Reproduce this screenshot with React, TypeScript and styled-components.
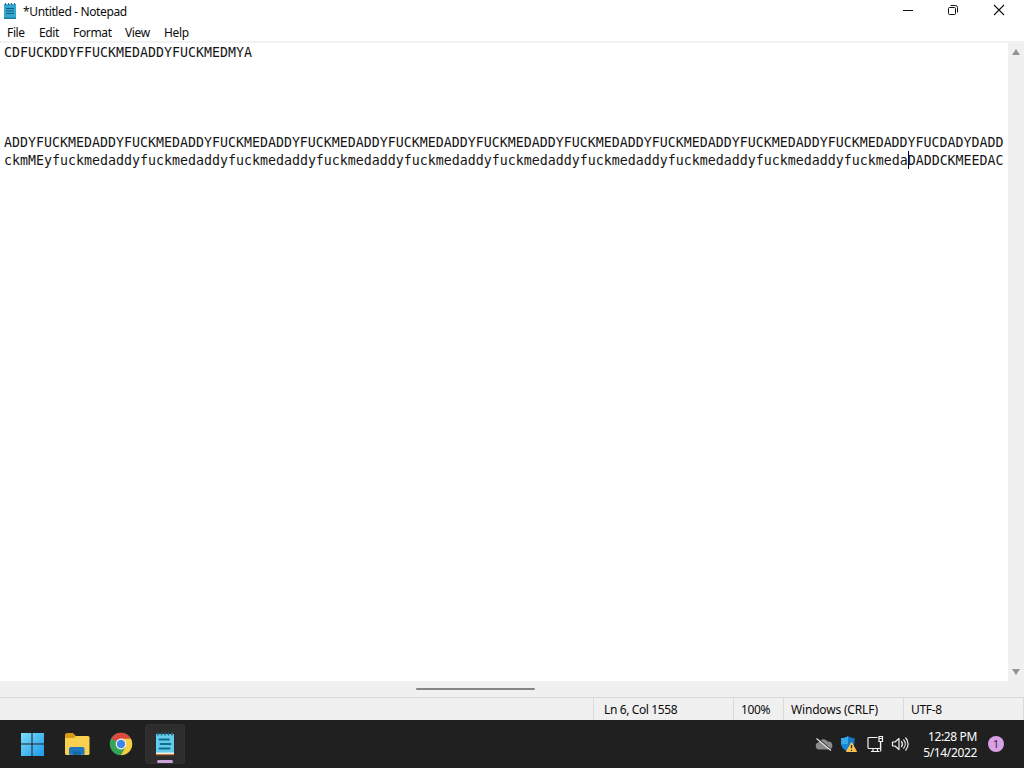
import React from 'react';
import styled, { createGlobalStyle } from 'styled-components';

const GlobalStyle = createGlobalStyle`
  * { box-sizing: border-box; }
  body { margin: 0; overflow: hidden; font-family: "Noto Sans", "Open Sans", sans-serif; font-size: 12px; color: #0c0c0c; }
`;

const Desktop = styled.div`
  width: 1024px;
  height: 768px;
  display: flex;
  flex-direction: column;
  background: #fff;
`;

const TitleBar = styled.header`
  height: 24px;
  flex: none;
  display: flex;
  align-items: center;
  padding: 0 1px 2px 3px;
`;

const Title = styled.div`
  flex: 1;
  padding: 2px 0 0 6px;
  line-height: 22px;
  letter-spacing: -0.37px;
`;

const WindowButton = styled.div<{ $width: number }>`
  width: ${(p) => p.$width}px;
  height: 22px;
  display: flex;
  justify-content: center;
  padding-top: 4px;
`;

const MenuBar = styled.nav`
  height: 19px;
  flex: none;
  display: flex;
  gap: 14px;
  padding-left: 7px;
  border-bottom: 2px solid #f2f2f2;
`;

const MenuItem = styled.span<{ $width: number }>`
  width: ${(p) => p.$width}px;
  white-space: nowrap;
  letter-spacing: -0.35px;
  line-height: 18px;
`;

const Editor = styled.main`
  flex: 1;
  display: flex;
  min-height: 0;
`;

const TextArea = styled.div`
  flex: 1;
  min-width: 0;
  overflow: hidden;
  padding: 1px 0 0 4px;
`;

const Line = styled.div`
  height: 18px;
  line-height: 18px;
  white-space: pre;
  font-family: "DejaVu Sans Mono", monospace;
  font-size: 13.289px;
  letter-spacing: 0.01px;
  color: #151515;
`;

const Caret = styled.span`
  display: inline-block;
  width: 1px;
  height: 18px;
  margin: -1px -1px 0 0;
  vertical-align: top;
  background: #000030;
`;

const VerticalScroll = styled.div`
  width: 16px;
  background: #f0f0f0;
  display: flex;
  flex-direction: column;
  justify-content: space-between;
  align-items: center;
  padding: 5px 0;
`;

const HorizontalScroll = styled.div`
  height: 16px;
  flex: none;
  background: #f0f0f0;
  padding: 7px 0 0 416px;
`;

const Thumb = styled.div`
  width: 119px;
  height: 2px;
  border-radius: 1px;
  background: #858585;
`;

const StatusBar = styled.footer`
  height: 23px;
  flex: none;
  display: flex;
  justify-content: flex-end;
  background: #f0f0f0;
  border-top: 1px solid #d9d9d9;
`;

const StatusCell = styled.div<{ $width: number; $pad: number; $spacing?: number }>`
  width: ${(p) => p.$width}px;
  padding-left: ${(p) => p.$pad}px;
  border-left: 1px solid #dadada;
  letter-spacing: ${(p) => p.$spacing ?? -0.38}px;
  line-height: 23px;
  white-space: nowrap;
  &:last-child { border-right: 1px solid #dadada; }
`;

const Taskbar = styled.div`
  height: 48px;
  flex: none;
  display: flex;
  justify-content: space-between;
  background: #202020;
  color: #fff;
`;

const Apps = styled.div`
  display: flex;
  align-items: center;
  gap: 4px;
  padding-left: 12px;
`;

const AppButton = styled.div<{ $active?: boolean }>`
  width: 40px;
  height: 40px;
  border-radius: 4px;
  display: flex;
  flex-direction: column;
  align-items: center;
  justify-content: space-between;
  padding-top: 8px;
  background: ${(p) => (p.$active ? '#2d2d2d' : 'transparent')};
  box-shadow: ${(p) => (p.$active ? 'inset 0 0 0 1px #323232' : 'none')};
  &:first-child { margin-right: 1px; }
`;

const ActiveMark = styled.div`
  width: 16px;
  height: 3px;
  margin-bottom: 1px;
  border-radius: 2px;
  background: #c9a3d6;
`;

const Tray = styled.div`
  display: flex;
  align-items: center;
  padding-right: 20px;
`;

const TrayIcon = styled.div<{ $width: number }>`
  width: ${(p) => p.$width}px;
  height: 20px;
`;

const Clock = styled.div`
  width: 66px;
  padding-top: 1px;
  text-align: right;
  line-height: 16px;
  letter-spacing: -0.36px;
  white-space: nowrap;
`;

const Badge = styled.div`
  width: 16px;
  height: 16px;
  margin-left: 11px;
  border-radius: 50%;
  background: #d9a0e6;
  color: #30203a;
  font-size: 10.5px;
  line-height: 16px;
  text-align: center;
`;

const SmallNotepad = () => (
  <svg width="14" height="18" viewBox="0 0 14 18">
    <path d="M1 2h12v15H1z" fill="#35a8cc" />
    <path d="M1 15.5h12V17H1z" fill="#1d7fa5" />
    <path d="M2.5 1v2M5.5 1v2M8.5 1v2M11.5 1v2" stroke="#236f8c" />
    <path d="M3 6.5h8M3 9h8M3 11.5h8" stroke="#135f80" strokeWidth="1.1" />
  </svg>
);

const WindowsLogo = () => (
  <svg width="24" height="24" viewBox="0 0 24 24">
    <defs>
      <linearGradient id="win" x1="0" y1="0" x2="1" y2="1">
        <stop offset="0" stopColor="#7bdcfb" />
        <stop offset="1" stopColor="#1b9bea" />
      </linearGradient>
    </defs>
    <path d="M1 1h10.5v10.5H1zM12.5 1H24v10.5H12.5zM1 12.5h10.5V24H1zM12.5 12.5H24V24H12.5z" fill="url(#win)" />
  </svg>
);

const Folder = () => (
  <svg width="26" height="24" viewBox="0 0 26 24">
    <path d="M1 3a2 2 0 0 1 2-2h6l3 3h12v8H1z" fill="#d99a16" />
    <path d="M1 6h9l2-2h12a1.500 1.500 0 0 1 1.500 1.500v16A1.500 1.500 0 0 1 24 23H2.500A1.500 1.500 0 0 1 1 21.500z" fill="#f9d04f" />
    <path d="M5 22.800v-5.800a2 2 0 0 1 2-2h11.500a2 2 0 0 1 2 2v5.800z" fill="#1f78bd" />
    <path d="M9 22.800v-3.300h8v3.300z" fill="#1567a8" />
  </svg>
);

const Chrome = () => (
  <svg width="24" height="24" viewBox="0 0 24 24">
    <circle cx="12" cy="12" r="11.200" fill="#35a456" />
    <path d="M12 12 2.300 6.400A11.200 11.200 0 0 1 21.700 6.400z" fill="#dd4b3e" />
    <path d="M12 6.700h9.900A11.200 11.200 0 0 1 12 23.200l4.600-8.500z" fill="#f9ce3d" />
    <circle cx="12" cy="12" r="5.400" fill="#f5f5f5" />
    <circle cx="12" cy="12" r="4.200" fill="#4285e8" />
  </svg>
);

const Notepad = () => (
  <svg width="20" height="24" viewBox="0 0 20 24">
    <path d="M1 2h18v19H1z" fill="#62cdea" />
    <path d="M1 20.500h18V22H1z" fill="#f1eee5" />
    <path d="M1 22h18v1.200H1z" fill="#c77a3b" />
    <path d="M3 .5v3M6.500 .5v3M10 .5v3M13.500 .5v3M17 .5v3" stroke="#22637a" strokeWidth="1.500" />
    <path d="M4.500 7.500h9.500M5.500 12h10M4.500 16.500h10" stroke="#126b8c" strokeWidth="1.800" strokeLinecap="round" />
  </svg>
);

const Cloud = () => (
  <svg width="18" height="20" viewBox="0 0 18 20">
    <path d="M4 15.500a3.700 3.700 0 0 1-.3-7.300A5 5 0 0 1 12.500 7.500 4 4 0 0 1 14 15.500z" fill="#8c8c8c" />
    <path d="m2.500 4.200 14 12" stroke="#202020" strokeWidth="1.500" />
    <path d="m1.500 4.500 14.500 12" stroke="#e8e8e8" strokeWidth="1.200" />
  </svg>
);

const Shield = () => (
  <svg width="18" height="20" viewBox="0 0 18 20">
    <path d="M8 2c2 1.500 4 2 6.500 2v5c0 4-3 7-6.500 8.500z" fill="#1676c6" />
    <path d="M8 2C6 3.500 4 4 1 4v5c0 4 3.500 7 7 8.500z" fill="#37a9e8" />
    <path d="M1 10h7v7.500C4.500 16 1.500 13.500 1 10z" fill="#1687d6" />
    <path d="m11.500 8.500 5 9h-10z" fill="#ffc24b" stroke="#ffc24b" strokeLinejoin="round" />
    <path d="M11.500 11v3.300M11.500 15.700v1.200" stroke="#302818" strokeWidth="1.300" />
  </svg>
);

const Network = () => (
  <svg width="18" height="20" viewBox="0 0 18 20" fill="none" stroke="#f2f2f2" strokeWidth="1.200">
    <path d="M11.500 3.500H3a1 1 0 0 0-1 1v9a1 1 0 0 0 1 1h11.500V8M5 17.500h8.500M7 14.500v3M11.500 14.500v3M13 2.500h3.500v5H13zM14.700 7.500v10M13 4.500h3.500" />
  </svg>
);

const Speaker = () => (
  <svg width="18" height="20" viewBox="0 0 18 20" fill="none" stroke="#f2f2f2" strokeWidth="1.200" strokeLinecap="round" strokeLinejoin="round">
    <path d="M1.500 8v4H4l4 3.500v-11L4 8zM10.500 7.500a4 4 0 0 1 0 5M12.700 5.800a6.500 6.500 0 0 1 0 8.400M14.800 4a9 9 0 0 1 0 12" />
  </svg>
);

const upperRun = 'ADDYFUCKMED'.repeat(10);
const lowerRun = 'fuckmedaddy'.repeat(9);

const menus = [
  { label: 'File', width: 18 },
  { label: 'Edit', width: 20 },
  { label: 'Format', width: 38 },
  { label: 'View', width: 25 },
  { label: 'Help', width: 26 },
];

export default function App() {
  return (
    <Desktop>
      <GlobalStyle />
      <TitleBar>
        <SmallNotepad />
        <Title>*Untitled - Notepad</Title>
        <WindowButton $width={46}>
          <svg width="12" height="12"><path d="M1 6.500h10" stroke="#111" /></svg>
        </WindowButton>
        <WindowButton $width={44}>
          <svg width="12" height="12" fill="none" stroke="#111">
            <rect x="1.500" y="3.500" width="7" height="7" rx="1" />
            <path d="M3.500 1.500h5a2 2 0 0 1 2 2v5" />
          </svg>
        </WindowButton>
        <WindowButton $width={48}>
          <svg width="12" height="12"><path d="m1 1 10 10M11 1 1 11" stroke="#111" strokeWidth="1.100" /></svg>
        </WindowButton>
      </TitleBar>
      <MenuBar>
        {menus.map((m) => (
          <MenuItem key={m.label} $width={m.width}>{m.label}</MenuItem>
        ))}
      </MenuBar>
      <Editor>
        <TextArea>
          <Line>CDFUCKDDYFFUCKMEDADDYFUCKMEDMYA</Line>
          <Line />
          <Line />
          <Line />
          <Line />
          <Line>{upperRun}ADDYFUCDADYDADD</Line>
          <Line>ckmMEy{lowerRun}fuckmeda<Caret />DADDCKMEEDAC</Line>
        </TextArea>
        <VerticalScroll>
          <svg width="10" height="8"><path d="m5 1 4 6H1z" fill="#949494" /></svg>
          <svg width="10" height="8"><path d="M1 1h8L5 7z" fill="#949494" /></svg>
        </VerticalScroll>
      </Editor>
      <HorizontalScroll><Thumb /></HorizontalScroll>
      <StatusBar>
        <StatusCell $width={140} $pad={10}>Ln 6, Col 1558</StatusCell>
        <StatusCell $width={50} $pad={7}>100%</StatusCell>
        <StatusCell $width={120} $pad={7} $spacing={-0.18}>Windows (CRLF)</StatusCell>
        <StatusCell $width={121} $pad={7} $spacing={-0.3}>UTF-8</StatusCell>
      </StatusBar>
      <Taskbar>
        <Apps>
          <AppButton><WindowsLogo /></AppButton>
          <AppButton><Folder /></AppButton>
          <AppButton><Chrome /></AppButton>
          <AppButton $active><Notepad /><ActiveMark /></AppButton>
        </Apps>
        <Tray>
          <TrayIcon $width={25}><Cloud /></TrayIcon>
          <TrayIcon $width={26}><Shield /></TrayIcon>
          <TrayIcon $width={25}><Network /></TrayIcon>
          <TrayIcon $width={20}><Speaker /></TrayIcon>
          <Clock>12:28 PM<br />5/14/2022</Clock>
          <Badge>1</Badge>
        </Tray>
      </Taskbar>
    </Desktop>
  );
}
